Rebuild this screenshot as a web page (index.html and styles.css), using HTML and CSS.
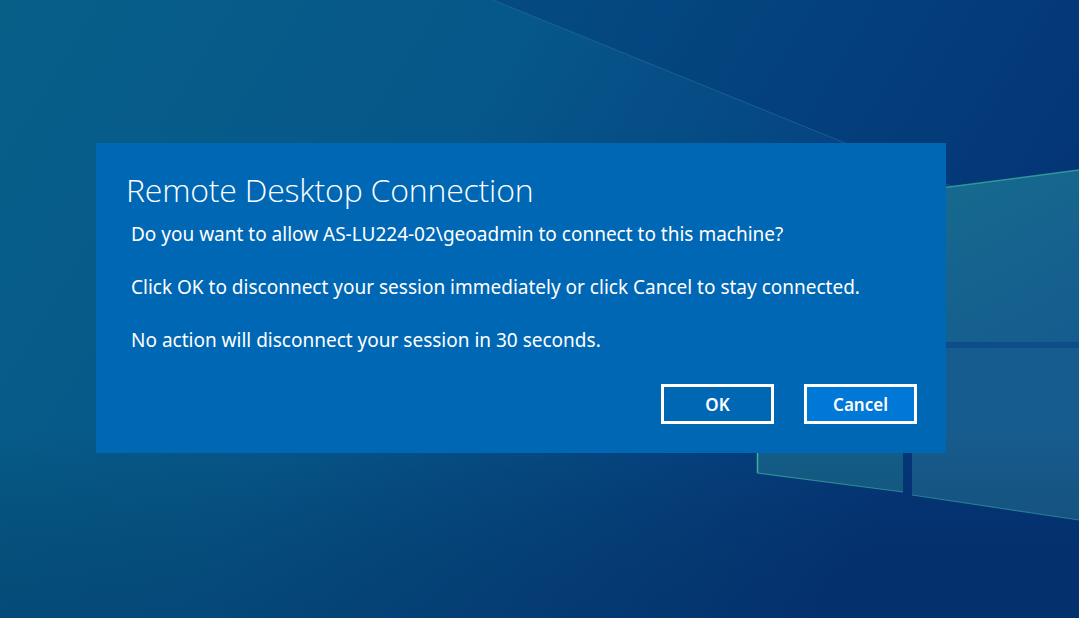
FILE: index.html
```html
<!DOCTYPE html>
<html lang="en">
<head>
<meta charset="utf-8">
<title>Remote Desktop Connection</title>
<link rel="stylesheet" href="styles.css">
</head>
<body>
<svg class="wallpaper" width="1079" height="618" viewBox="0 0 1079 618" aria-hidden="true">
  <defs>
    <linearGradient id="bg" x1="0" y1="0" x2="1" y2="0.35">
      <stop offset="0" stop-color="#075f88"/>
      <stop offset="0.45" stop-color="#06578a"/>
      <stop offset="1" stop-color="#05367a"/>
    </linearGradient>
    <linearGradient id="bgv" x1="0" y1="0" x2="0" y2="1">
      <stop offset="0" stop-color="#000000" stop-opacity="0"/>
      <stop offset="0.7" stop-color="#000000" stop-opacity="0"/>
      <stop offset="1" stop-color="#02204a" stop-opacity="0.25"/>
    </linearGradient>
    <linearGradient id="pane" x1="0" y1="0" x2="1" y2="1">
      <stop offset="0" stop-color="#17708f"/>
      <stop offset="1" stop-color="#155c8e"/>
    </linearGradient>
  </defs>
  <rect width="1079" height="618" fill="url(#bg)"/>
  <polygon points="493,0 1079,0 1079,238" fill="#04336f" opacity="0.35"/>
  <line x1="493" y1="0" x2="1079" y2="238" stroke="#2a73a8" stroke-width="1" opacity="0.55"/>
  <!-- upper-right pane -->
  <polygon points="757,212 1079,170 1079,342 757,342" fill="url(#pane)"/>
  <line x1="757" y1="212" x2="1079" y2="170" stroke="#3aa7a2" stroke-width="1.5" opacity="0.8"/>
  <!-- divider -->
  <rect x="757" y="342" width="322" height="6" fill="#0d4d8a"/>
  <!-- lower-left pane -->
  <polygon points="757,348 903,348 903,492 757,473" fill="#145f8a"/>
  <line x1="757.5" y1="453" x2="757.5" y2="473" stroke="#3fb89e" stroke-width="1.5"/>
  <line x1="757" y1="473" x2="903" y2="492" stroke="#3aa7a2" stroke-width="1.2" opacity="0.8"/>
  <!-- lower-right pane -->
  <polygon points="912,348 1079,348 1079,520 912,495" fill="#175c8e"/>
  <line x1="912" y1="495" x2="1079" y2="520" stroke="#2f9ea6" stroke-width="1.2" opacity="0.8"/>
  <rect width="1079" height="618" fill="url(#bgv)"/>
</svg>

<main class="stage">
  <section class="dialog" role="dialog" aria-labelledby="dlg-title">
    <h1 class="dialog-title" id="dlg-title">Remote Desktop Connection</h1>
    <div class="dialog-body">
      <p>Do you want to allow AS-LU224-02\geoadmin to connect to this machine?</p>
      <p>Click OK to disconnect your session immediately or click Cancel to stay connected.</p>
      <p>No action will disconnect your session in 30 seconds.</p>
    </div>
    <div class="dialog-actions">
      <button class="btn">OK</button>
      <button class="btn btn-primary">Cancel</button>
    </div>
  </section>
</main>
</body>
</html>
```

FILE: styles.css
```css
html, body {
  margin: 0;
  padding: 0;
  width: 1079px;
  height: 618px;
  overflow: hidden;
}

body {
  position: relative;
  background: #075f88;
  font-family: "Noto Sans", "Open Sans", "Liberation Sans", sans-serif;
  color: #ffffff;
}

.wallpaper {
  position: absolute;
  left: 0;
  top: 0;
  display: block;
}

.stage {
  position: relative;
  padding: 143px 0 0 96px;
}

.dialog {
  width: 850px;
  height: 310px;
  box-sizing: border-box;
  background: #0067b4;
  padding: 25px 29px 0 30px;
  display: flex;
  flex-direction: column;
}

.dialog-title {
  margin: 0;
  font-family: "Open Sans", "Noto Sans", sans-serif;
  font-weight: 300;
  font-size: 32px;
  line-height: 44px;
  letter-spacing: -0.2px;
}

.dialog-body {
  padding-left: 5px;
  margin-top: 9px;
}

.dialog-body p {
  margin: 0 0 27px 0;
  font-size: 19px;
  line-height: 26px;
}

.dialog-body p:last-child {
  margin-bottom: 0;
}

.dialog-actions {
  display: flex;
  justify-content: flex-end;
  gap: 30px;
  margin-top: 31px;
}

.btn {
  width: 113px;
  height: 40px;
  box-sizing: border-box;
  border: 3px solid #ffffff;
  background: #0067b4;
  color: #ffffff;
  font-family: "Noto Sans", "Open Sans", sans-serif;
  font-weight: 600;
  font-size: 17px;
  padding: 0;
}

.btn-primary {
  background: #0078d7;
}
```
